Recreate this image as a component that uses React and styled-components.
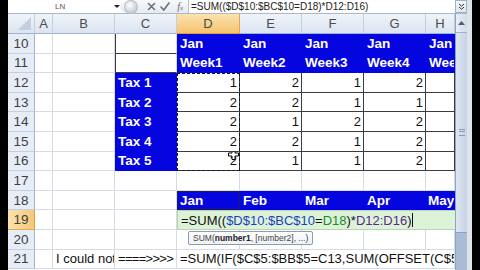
import React from 'react';
import styled, { createGlobalStyle } from 'styled-components';

const GlobalStyle = createGlobalStyle`
  html, body { margin: 0; padding: 0; background: #000; }
  body { width: 480px; height: 270px; overflow: hidden; font-family: "Liberation Sans", Arial, sans-serif; }
`;

const BLUE = '#0505e0';
const GRID = '#d5dce8';
const DARK = '#3c3c3c';

const Screen = styled.div`
  display: flex;
  width: 480px;
  height: 270px;
  overflow: hidden;
  background: #000;
`;

const Edge = styled.div`
  flex: none;
  width: ${p => p.$w}px;
  background: ${p => p.$bg};
`;

const Workbook = styled.div`
  flex: none;
  width: 459px;
  display: flex;
  flex-direction: column;
  background: #fff;
`;

/* formula bar */
const FormulaBar = styled.div`
  box-sizing: border-box;
  height: 14px;
  display: flex;
  border-bottom: 1px solid #a9b8cc;
  background: #fff;
`;

const NameBox = styled.div`
  width: 112px;
  display: flex;
  align-items: center;
  position: relative;
  font-size: 8px;
  color: #555;
  span { margin-left: 47px; }
`;

const Drop = styled.div`
  position: absolute;
  right: 0;
  top: 5px;
  width: 0;
  height: 0;
  border-left: 3px solid transparent;
  border-right: 3px solid transparent;
  border-top: 3px solid #222;
`;

const Buttons = styled.div`
  width: 68px;
  display: flex;
  align-items: center;
  background: linear-gradient(#f6f8fb, #e6ebf2);
  border-radius: 7px 0 0 7px;
`;

const Knob = styled.div`
  width: 12px;
  height: 12px;
  margin-left: 4px;
  border-radius: 50%;
  background: radial-gradient(circle at 40% 35%, #ffffff, #c8cdd4 70%, #a9afb8);
  border: 1px solid #b8bec6;
`;

const IconBtn = styled.div`
  width: ${p => p.$w || 14}px;
  display: flex;
  align-items: center;
  justify-content: center;
  margin-left: ${p => p.$ml || 0}px;
  color: #777;
  font-size: 10px;
`;

const Fx = styled.span`
  font-family: "Liberation Serif", serif;
  font-style: italic;
  font-size: 10px;
  color: #666;
  em { font-size: 7px; }
`;

const FormulaInput = styled.div`
  flex: 1;
  display: flex;
  align-items: center;
  padding-left: 2px;
  border-left: 1px solid #b5c1d2;
  font-size: 10px;
  color: #222;
  white-space: nowrap;
  overflow: hidden;
`;

const Expand = styled.div`
  box-sizing: border-box;
  width: 12px;
  display: flex;
  align-items: center;
  justify-content: center;
  border: 1px solid #9fb0c8;
  background: linear-gradient(#f3f6fa, #dfe6ef);
`;

/* sheet */
const Body = styled.div`
  flex: 1;
  display: flex;
  overflow: hidden;
`;

const Grid = styled.div`
  flex: none;
  width: 447px;
  display: grid;
  grid-template-columns: 27px 18px 62px 62px 63px 62px 62px 62px 29px;
  grid-template-rows: 20px repeat(12, 19.6px);
  overflow: hidden;
`;

const ColHead = styled.div`
  grid-column: ${p => p.$col};
  grid-row: 1;
  box-sizing: border-box;
  display: flex;
  align-items: center;
  justify-content: center;
  font-size: 13px;
  color: #4b4b4b;
  border-right: 1px solid ${p => (p.$active ? '#e3a84e' : '#c2cfe0')};
  border-bottom: 1px solid ${p => (p.$active ? '#e39f37' : '#9fb3cc')};
  background: ${p => (p.$active ? 'linear-gradient(#fbe2b0, #f5c46e)' : 'linear-gradient(#f0f4fa, #dbe4f0)')};
`;

const Corner = styled(ColHead)`
  position: relative;
  &::after {
    content: '';
    position: absolute;
    right: 3px;
    bottom: 3px;
    width: 0;
    height: 0;
    border-left: 13px solid transparent;
    border-bottom: 13px solid #c3cfdf;
  }
`;

const RowHead = styled.div`
  grid-column: 1;
  grid-row: ${p => p.$row};
  box-sizing: border-box;
  display: flex;
  align-items: center;
  justify-content: center;
  font-size: 13.5px;
  color: #3f3f3f;
  border-right: 1px solid ${p => (p.$active ? '#e39f37' : '#9fb3cc')};
  border-bottom: 1px solid ${p => (p.$active ? '#e3a84e' : '#c2cfe0')};
  background: ${p => (p.$active ? 'linear-gradient(90deg, #fbe2b0, #f5c878)' : '#e6edf7')};
`;

const fills = {
  plain: { bg: '#fff', r: GRID, b: GRID },
  blue: { bg: BLUE, r: BLUE, b: BLUE },
  boxed: { bg: '#fff', r: DARK, b: DARK },
  frame: { bg: '#fff', r: GRID, b: DARK },
};

const Cell = styled.div`
  grid-column: ${p => p.$col} / span ${p => p.$span || 1};
  grid-row: ${p => p.$row};
  position: relative;
  box-sizing: border-box;
  display: flex;
  align-items: center;
  justify-content: ${p => (p.$right ? 'flex-end' : 'flex-start')};
  padding: 0 ${p => (p.$right ? 2 : p.$pad ?? 3)}px;
  overflow: hidden;
  white-space: nowrap;
  letter-spacing: ${p => p.$tight ? '-0.7px' : 'normal'};
  font-size: ${p => (p.$kind === 'blue' ? 13.5 : 13)}px;
  font-weight: ${p => (p.$kind === 'blue' ? 700 : 400)};
  color: ${p => (p.$kind === 'blue' ? '#fff' : '#111')};
  background: ${p => fills[p.$kind].bg};
  border-right: 1px solid ${p => fills[p.$kind].r};
  border-bottom: 1px solid ${p => fills[p.$kind].b};
  box-shadow: ${p => (p.$leftLine ? `inset 1px 0 ${DARK}` : p.$selected ? 'inset 0 0 0 1px #202040' : 'none')};
`;

const EditCell = styled.div`
  grid-column: 5 / span 5;
  grid-row: 11;
  box-sizing: border-box;
  display: flex;
  align-items: center;
  padding-left: 3px;
  white-space: nowrap;
  overflow: hidden;
  font-size: 13px;
  color: #111;
  background: #dcf3d8;
  border: 1px solid #b9d2b5;
  border-right: none;
`;

const Ref = styled.span`
  color: ${p => p.$c};
`;

const Caret = styled.span`
  display: inline-block;
  width: 1px;
  height: 14px;
  background: #111;
`;

const Ants = styled.div`
  grid-column: 5;
  grid-row: 4 / span 5;
  z-index: 2;
  box-sizing: border-box;
  border: 1px dashed #1a1a1a;
  pointer-events: none;
`;

const Tip = styled.div`
  grid-column: 5 / span 3;
  grid-row: 12;
  z-index: 3;
  align-self: start;
  justify-self: start;
  margin: 1px 0 0 11px;
  padding: 1px 4px;
  font-size: 8.5px;
  color: #444;
  background: linear-gradient(#fdfdfe, #eef1f5);
  border: 1px solid #8f9cb0;
  border-radius: 2px;
  white-space: nowrap;
  b { color: #222; }
`;

const Cursor = styled.svg`
  position: absolute;
  left: 51px;
  top: -3px;
`;

const Scroll = styled.div`
  flex: none;
  width: 12px;
  display: flex;
  flex-direction: column;
  background: #a8bcd6;
  border-left: 1px solid #8da3c2;
  box-sizing: border-box;
`;

const ArrowBtn = styled.div`
  height: 18px;
  display: flex;
  align-items: center;
  justify-content: center;
  background: linear-gradient(90deg, #e9eef6, #d3dcea);
  border-bottom: 1px solid #9fb1ca;
`;

const Thumb = styled.div`
  height: 199px;
  display: flex;
  align-items: center;
  justify-content: center;
  background: linear-gradient(90deg, #dfe6f1, #c5d2e5);
  border-bottom: 1px solid #8ba1c0;
`;

const Grip = styled.div`
  width: 6px;
  height: 5px;
  border-top: 1px solid #8799b5;
  border-bottom: 1px solid #8799b5;
  position: relative;
  &::after {
    content: '';
    position: absolute;
    left: 0;
    right: 0;
    top: 1px;
    border-top: 1px solid #8799b5;
  }
`;

const cols = ['A', 'B', 'C', 'D', 'E', 'F', 'G', 'H'];

const numbers = {
  12: [1, 2, 1, 2],
  13: [2, 2, 1, 1],
  14: [2, 1, 2, 2],
  15: [2, 2, 1, 2],
  16: [2, 1, 1, 2],
};

const weeks = ['Week1', 'Week2', 'Week3', 'Week4', 'Week5'];
const months = ['Jan', 'Feb', 'Mar', 'Apr', 'May'];

function cellsFor(r) {
  const row = r - 8;
  const out = [];
  // columns A..H are grid columns 2..9
  for (let c = 2; c <= 9; c++) {
    const key = `${r}-${c}`;
    const dIdx = c - 5;
    if ((r === 19 || r === 21) && c >= 5) continue;

    if ((r === 10 || r === 11) && c === 4) {
      out.push(<Cell key={key} $row={row} $col={c} $kind="frame" $leftLine />);
    } else if ((r === 10 || r === 11) && c >= 5) {
      out.push(
        <Cell key={key} $row={row} $col={c} $kind="blue">
          {r === 10 ? 'Jan' : weeks[dIdx]}
        </Cell>
      );
    } else if (r >= 12 && r <= 16 && c === 4) {
      out.push(<Cell key={key} $row={row} $col={c} $kind="blue">Tax {r - 11}</Cell>);
    } else if (r >= 12 && r <= 16 && c >= 5) {
      out.push(
        <Cell key={key} $row={row} $col={c} $kind="boxed" $right>
          {numbers[r][dIdx]}
          {r === 16 && c === 5 && (
            <Cursor width="11" height="11" viewBox="0 0 11 11">
              <path d="M4 0.5h3v3.5h3.5v3h-3.5v3.5h-3v-3.5h-3.5v-3h3.5z" fill="#fff" stroke="#000" strokeWidth="1" />
            </Cursor>
          )}
        </Cell>
      );
    } else if (r === 18 && c >= 5) {
      out.push(
        <Cell key={key} $row={row} $col={c} $kind="blue" $selected={c === 5} $pad={c === 9 ? 2 : 3}>
          {months[dIdx]}
        </Cell>
      );
    } else if (r === 21 && c === 3) {
      out.push(<Cell key={key} $row={row} $col={c} $kind="plain">I could not</Cell>);
    } else if (r === 21 && c === 4) {
      out.push(<Cell key={key} $row={row} $col={c} $kind="plain" $tight>{'====>>>>'}</Cell>);
    } else {
      out.push(<Cell key={key} $row={row} $col={c} $kind="plain" />);
    }
  }
  return out;
}

export default function App() {
  const rows = [];
  for (let r = 10; r <= 21; r++) rows.push(r);

  return (
    <Screen>
      <GlobalStyle />
      <Edge $w={8} $bg="#000" />
      <Workbook>
        <FormulaBar>
          <NameBox>
            <span>LN</span>
            <Drop />
          </NameBox>
          <Buttons>
            <Knob />
            <IconBtn $ml={7}>
              <svg width="9" height="9" viewBox="0 0 9 9">
                <path d="M1.5 1.5l6 6M7.5 1.5l-6 6" stroke="#707070" strokeWidth="1.6" strokeLinecap="round" />
              </svg>
            </IconBtn>
            <IconBtn>
              <svg width="10" height="9" viewBox="0 0 10 9">
                <path d="M1 5l2.8 3L9 1" stroke="#707070" strokeWidth="1.6" fill="none" strokeLinecap="round" />
              </svg>
            </IconBtn>
            <IconBtn $w={16}>
              <Fx>f<em>x</em></Fx>
            </IconBtn>
          </Buttons>
          <FormulaInput>=SUM(($D$10:$BC$10=D18)*D12:D16)</FormulaInput>
          <Expand>
            <svg width="7" height="7" viewBox="0 0 7 7">
              <path d="M1 1l2.5 2.2L6 1M1 4l2.5 2.2L6 4" stroke="#333" strokeWidth="1" fill="none" />
            </svg>
          </Expand>
        </FormulaBar>
        <Body>
          <Grid>
            <Corner $col={1} />
            {cols.map((c, i) => (
              <ColHead key={c} $col={i + 2} $active={c === 'D'}>{c}</ColHead>
            ))}
            {rows.map(r => (
              <React.Fragment key={r}>
                <RowHead $row={r - 8} $active={r === 19}>{r}</RowHead>
                {cellsFor(r)}
              </React.Fragment>
            ))}
            <Ants />
            <EditCell>
              =SUM((<Ref $c="#1f3fbf">$D$10:$BC$10</Ref>=<Ref $c="#1c8a2a">D18</Ref>)*<Ref $c="#5b2a8c">D12:D16</Ref>)
              <Caret />
            </EditCell>
            <Tip>
              SUM(<b>number1</b>, [number2], ...)
            </Tip>
            <Cell $row={13} $col={5} $span={5} $kind="plain">
              =SUM(IF($C$5:$BB$5=C13,SUM(OFFSET(C$5:$BB$5,0,0,1,1))))
            </Cell>
          </Grid>
          <Scroll>
            <ArrowBtn>
              <svg width="7" height="4" viewBox="0 0 7 4">
                <path d="M0 4L3.5 0L7 4z" fill="#4d5f7a" />
              </svg>
            </ArrowBtn>
            <Thumb>
              <Grip />
            </Thumb>
          </Scroll>
        </Body>
      </Workbook>
      <Edge $w={5} $bg="#dfe4ea" />
      <Edge $w={8} $bg="#000" />
    </Screen>
  );
}
